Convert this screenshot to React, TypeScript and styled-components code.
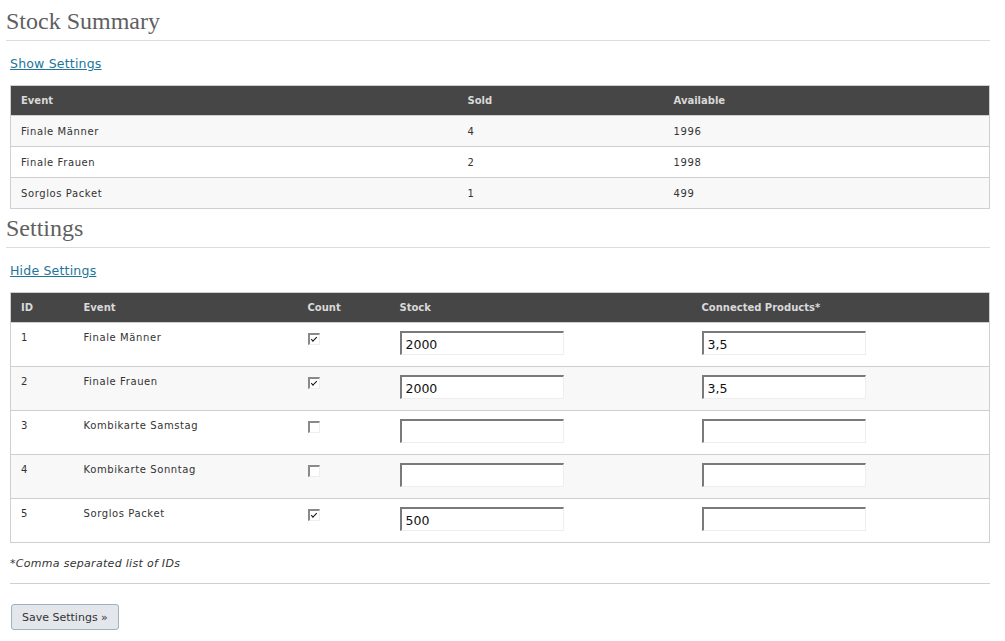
import React from "react";
import styled, { createGlobalStyle } from "styled-components";

const Global = createGlobalStyle`
  html, body { margin: 0; padding: 0; background: #fff; }
  body { font-family: "DejaVu Sans", Verdana, sans-serif; color: #333; }
`;

const Page = styled.div`
  padding: 2px 15px 20px 6px;
  width: 984px;
`;

const Title = styled.h2`
  margin: 0;
  padding: 6px 0 0 0;
  height: 32px;
  border-bottom: 1px solid #dcdcdc;
  font-family: "Liberation Serif", Georgia, serif;
  font-weight: normal;
  font-size: 24px;
  line-height: 26px;
  color: #5f5f5f;
`;

const Section = styled.div`
  padding-left: 4px;
`;

const ToggleLink = styled.a`
  display: block;
  margin: 15px 0 14px 0;
  font-size: 12.5px;
  line-height: 15px;
  letter-spacing: 0.2px;
  color: #21759b;
  text-decoration: underline;
  cursor: pointer;
`;

const Table = styled.table`
  width: 980px;
  border-collapse: collapse;
  table-layout: fixed;
  border: 1px solid #cfcfcf;
  font-size: 10px;
`;

const Head = styled.th`
  background: #464646;
  color: #d9d9d9;
  font-weight: bold;
  text-align: left;
  padding: 0 10px;
  height: 30px;
  box-sizing: border-box;
`;

const Row = styled.tr<{ $alt?: boolean }>`
  background: ${(p) => (p.$alt ? "#f8f8f8" : "#fff")};
  border-top: 1px solid #cfcfcf;
`;

const Cell = styled.td<{ $tall?: boolean }>`
  padding: ${(p) => (p.$tall ? "9px 10px 0 10px" : "0 10px")};
  height: ${(p) => (p.$tall ? "44px" : "31px")};
  vertical-align: ${(p) => (p.$tall ? "top" : "middle")};
  color: #333;
  box-sizing: border-box;
  letter-spacing: 0.6px;
`;

const Check = styled.input.attrs({ type: "checkbox", readOnly: true })`
  appearance: none;
  margin: 0;
  width: 12px;
  height: 12px;
  box-sizing: border-box;
  border-top: 2px solid #8a8a8a;
  border-left: 2px solid #8a8a8a;
  border-right: 1px solid #eee;
  border-bottom: 1px solid #eee;
  background: #fff;
  position: relative;
  top: 1px;
  &:checked::after {
    content: "";
    position: absolute;
    left: 1px;
    top: 2px;
    width: 5px;
    height: 2px;
    border-left: 1.5px solid #111;
    border-bottom: 1.5px solid #111;
    transform: rotate(-45deg);
  }
`;

const TextInput = styled.input.attrs({ type: "text", readOnly: true })`
  width: 164px;
  height: 24px;
  box-sizing: border-box;
  margin: -1px 0 0 0;
  padding: 2px 4px 0 4px;
  border-top: 2px solid #7a7a7a;
  border-left: 2px solid #7a7a7a;
  border-right: 1px solid #eee;
  border-bottom: 1px solid #eee;
  background: #fff;
  font-family: "DejaVu Sans", Verdana, sans-serif;
  font-size: 12.5px;
  color: #111;
  outline: none;
`;

const Note = styled.p`
  margin: 14px 0 0 0;
  font-size: 11px;
  font-style: italic;
  color: #333;
  line-height: 14px;
  letter-spacing: 0.3px;
  padding-bottom: 12px;
  border-bottom: 1px solid #cfcfcf;
  width: 980px;
`;

const SaveButton = styled.button`
  margin: 20px 0 0 1px;
  height: 26px;
  padding: 0 10px;
  font-family: "DejaVu Sans", Verdana, sans-serif;
  font-size: 11px;
  color: #333;
  background: #e3e7eb;
  border: 1px solid #9fb0bf;
  border-radius: 3px;
`;

const summary = [
  { event: "Finale Männer", sold: 4, available: 1996 },
  { event: "Finale Frauen", sold: 2, available: 1998 },
  { event: "Sorglos Packet", sold: 1, available: 499 },
];

const settings = [
  { id: 1, event: "Finale Männer", count: true, stock: "2000", connected: "3,5" },
  { id: 2, event: "Finale Frauen", count: true, stock: "2000", connected: "3,5" },
  { id: 3, event: "Kombikarte Samstag", count: false, stock: "", connected: "" },
  { id: 4, event: "Kombikarte Sonntag", count: false, stock: "", connected: "" },
  { id: 5, event: "Sorglos Packet", count: true, stock: "500", connected: "" },
];

export default function App() {
  return (
    <Page>
      <Global />
      <Title>Stock Summary</Title>
      <Section>
        <ToggleLink>Show Settings</ToggleLink>
        <Table>
          <colgroup>
            <col style={{ width: 447 }} />
            <col style={{ width: 206 }} />
            <col />
          </colgroup>
          <thead>
            <tr>
              <Head>Event</Head>
              <Head>Sold</Head>
              <Head>Available</Head>
            </tr>
          </thead>
          <tbody>
            {summary.map((r, i) => (
              <Row key={r.event} $alt={i % 2 === 0}>
                <Cell>{r.event}</Cell>
                <Cell>{r.sold}</Cell>
                <Cell>{r.available}</Cell>
              </Row>
            ))}
          </tbody>
        </Table>
      </Section>
      <Title>Settings</Title>
      <Section>
        <ToggleLink>Hide Settings</ToggleLink>
        <Table>
          <colgroup>
            <col style={{ width: 63 }} />
            <col style={{ width: 224 }} />
            <col style={{ width: 92 }} />
            <col style={{ width: 302 }} />
            <col />
          </colgroup>
          <thead>
            <tr>
              <Head>ID</Head>
              <Head>Event</Head>
              <Head>Count</Head>
              <Head>Stock</Head>
              <Head>Connected Products*</Head>
            </tr>
          </thead>
          <tbody>
            {settings.map((r, i) => (
              <Row key={r.id} $alt={i % 2 === 1}>
                <Cell $tall>{r.id}</Cell>
                <Cell $tall>{r.event}</Cell>
                <Cell $tall>
                  <Check defaultChecked={r.count} />
                </Cell>
                <Cell $tall>
                  <TextInput defaultValue={r.stock} />
                </Cell>
                <Cell $tall>
                  <TextInput defaultValue={r.connected} />
                </Cell>
              </Row>
            ))}
          </tbody>
        </Table>
        <Note>*Comma separated list of IDs</Note>
        <SaveButton>Save Settings »</SaveButton>
      </Section>
    </Page>
  );
}
